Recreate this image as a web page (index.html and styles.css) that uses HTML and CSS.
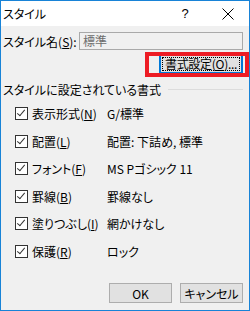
FILE: index.html
```html
<!DOCTYPE html>
<html lang="ja">
<head>
  <meta charset="UTF-8" />
  <title>スタイル</title>
  <link rel="stylesheet" href="styles.css">
</head>
<body>
  <div class="dialog">
    <div class="titlebar">
      <span class="title">スタイル</span>
      <span class="help">?</span>
      <span class="close">
        <svg width="12" height="12" viewBox="0 0 12 12"><path d="M0.5 0.5 L11.5 11.5 M11.5 0.5 L0.5 11.5" stroke="#000" stroke-width="1" fill="none"/></svg>
      </span>
    </div>

    <div class="content">
      <div class="name-row">
        <label class="name-label">スタイル名(<u>S</u>):</label>
        <div class="name-box">標準</div>
      </div>

      <div class="format-row">
        <button class="btn btn-focus"><span class="focus-rect">書式設定(<u>O</u>)...</span></button>
        <!-- annotation frame -->
        <div class="highlight"></div>
      </div>

      <div class="group-title">
        <span>スタイルに設定されている書式</span>
        <div class="group-line"></div>
      </div>

      <ul class="items">
        <li><span class="check"></span><span class="item-label">表示形式(<u>N</u>)</span><span class="item-value">G/標準</span></li>
        <li><span class="check"></span><span class="item-label">配置(<u>L</u>)</span><span class="item-value">配置: 下詰め, 標準</span></li>
        <li><span class="check"></span><span class="item-label">フォント(<u>F</u>)</span><span class="item-value">MS Pゴシック 11</span></li>
        <li><span class="check"></span><span class="item-label">罫線(<u>B</u>)</span><span class="item-value">罫線なし</span></li>
        <li><span class="check"></span><span class="item-label">塗りつぶし(<u>I</u>)</span><span class="item-value">網かけなし</span></li>
        <li><span class="check"></span><span class="item-label">保護(<u>R</u>)</span><span class="item-value">ロック</span></li>
      </ul>

      <div class="actions">
        <button class="btn btn-ok">OK</button>
        <button class="btn btn-cancel">キャンセル</button>
      </div>
    </div>
  </div>
</body>
</html>
```

FILE: styles.css
```css
body {
  margin: 0;
  font-family: "Noto Sans CJK JP", "Noto Sans", sans-serif;
  font-size: 12px;
  font-feature-settings: "palt";
  color: #000;
}

.dialog {
  width: 250px;
  height: 311px;
  box-sizing: border-box;
  border: 1px solid #1883d7;
  background: #f0f0f0;
  display: flex;
  flex-direction: column;
  overflow: hidden;
}

.titlebar {
  height: 25px;
  background: #fff;
  display: flex;
  align-items: center;
  padding-left: 2px;
  flex-shrink: 0;
}

.title {
  flex: 1;
  font-size: 12px;
}

.help {
  width: 20px;
  margin-right: 27px;
  text-align: center;
  font-family: "Liberation Sans", sans-serif;
  font-size: 13px;
}

.close {
  width: 12px;
  height: 12px;
  margin-right: 15px;
  display: flex;
}

.content {
  flex: 1;
  padding: 6px 6px 0 2px;
  display: flex;
  flex-direction: column;
  position: relative;
}

.name-row {
  display: flex;
  align-items: center;
  height: 18px;
}

.name-label {
  width: 76px;
}

.name-box {
  flex: 1;
  height: 18px;
  box-sizing: border-box;
  border: 1px solid #a9a9a9;
  background: #f0f0f0;
  color: #6d6d6d;
  padding-left: 3px;
  line-height: 15px;
}

.format-row {
  display: flex;
  justify-content: flex-end;
  margin-top: 4px;
  position: relative;
}

.btn {
  font-family: inherit;
  font-size: 12px;
  font-feature-settings: "palt";
  background: #e1e1e1;
  border: 1px solid #adadad;
  padding: 0;
  height: 20px;
  color: #000;
  white-space: nowrap;
}

.btn-focus {
  width: 84px;
  border: 2px solid #0078d7;
  padding: 1px;
  display: flex;
}

.focus-rect {
  flex: 1;
  border: 1px dotted #000;
  line-height: 12px;
  text-align: center;
  letter-spacing: -0.3px;
  overflow: visible;
}

.highlight {
  position: absolute;
  left: 142px;
  top: -2px;
  width: 104px;
  height: 25px;
  box-sizing: border-box;
  border: 4px solid #ed1c24;
  pointer-events: none;
}

.group-title {
  display: flex;
  align-items: center;
  margin-top: 8px;
  height: 14px;
}

.group-line {
  flex: 1;
  height: 0;
  border-top: 1px solid #dcdcdc;
  margin-left: 7px;
  margin-top: 1px;
}

.items {
  list-style: none;
  margin: 11px 0 0 0;
  padding: 0 0 0 12px;
}

.items li {
  display: flex;
  align-items: center;
  height: 13px;
  margin-bottom: 14.6px;
}

.check {
  width: 13px;
  height: 13px;
  box-sizing: border-box;
  border: 1px solid #333;
  background: #fff;
  position: relative;
  flex-shrink: 0;
}

.check::after {
  content: "";
  position: absolute;
  left: 3px;
  top: 0px;
  width: 3px;
  height: 7px;
  border-right: 1px solid #333;
  border-bottom: 1px solid #333;
  transform: rotate(40deg);
}

.item-label {
  width: 75px;
  margin-left: 4px;
}

.actions {
  margin-top: auto;
  margin-bottom: 7px;
  display: flex;
  justify-content: flex-end;
  gap: 8px;
}

.btn-ok,
.btn-cancel {
  width: 63px;
}

u {
  text-decoration: underline;
  text-underline-offset: 1px;
}
```
